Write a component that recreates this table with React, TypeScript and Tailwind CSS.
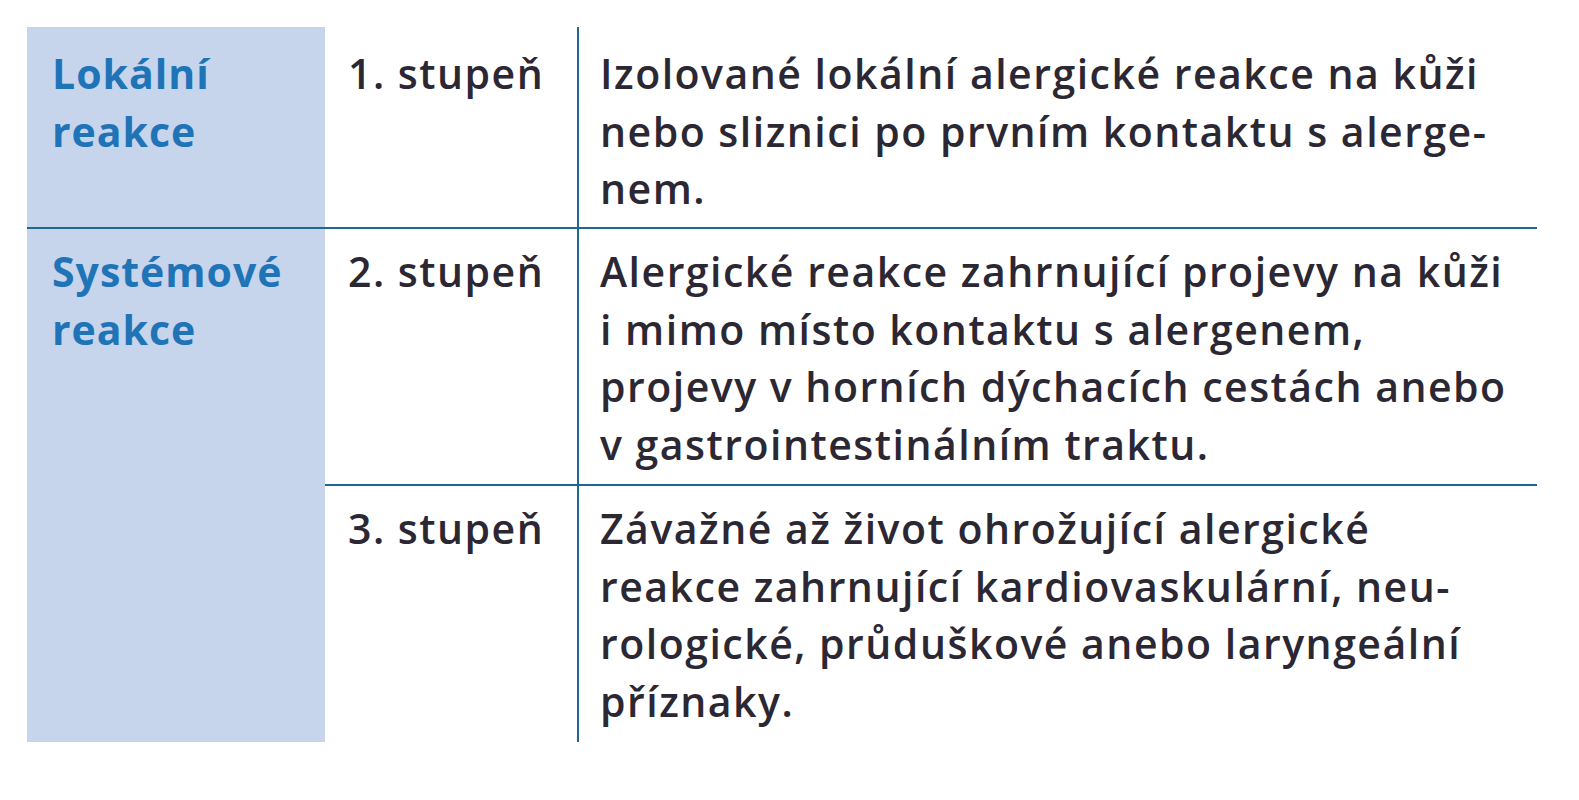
const rows = [
  {
    grade: "1. stupeň",
    lines: [
      "Izolované lokální alergické reakce na kůži",
      "nebo sliznici po prvním kontaktu s alerge-",
      "nem.",
    ],
  },
  {
    grade: "2. stupeň",
    lines: [
      "Alergické reakce zahrnující projevy na kůži",
      "i mimo místo kontaktu s alergenem,",
      "projevy v horních dýchacích cestách anebo",
      "v gastrointestinálním traktu.",
    ],
  },
  {
    grade: "3. stupeň",
    lines: [
      "Závažné až život ohrožující alergické",
      "reakce zahrnující kardiovaskulární, neu-",
      "rologické, průduškové anebo laryngeální",
      "příznaky.",
    ],
  },
];

function Lines({ lines }: { lines: string[] }) {
  return (
    <>
      {lines.map((l) => (
        <div key={l} className="whitespace-nowrap">
          {l}
        </div>
      ))}
    </>
  );
}

export default function App() {
  return (
    <div className="w-[1579px] h-[800px] bg-white pt-[27px] pl-[27px] font-['Open_Sans','Lato',sans-serif] font-semibold text-[41px] tracking-[1.5px] leading-[57.5px] text-[#2b2733]">
      <div className="grid grid-cols-[298px_252px_960px] grid-rows-[202px_257px_256px] w-[1510px]">
        {/* row 1 */}
        <div className="bg-[#c6d4ec] border-b-2 border-[#1d6792] pl-[25px] pt-[18px] font-bold tracking-[1px] text-[#1f73b7]">
          <Lines lines={["Lokální", "reakce"]} />
        </div>
        <div className="border-b-2 border-[#1d6792] pl-[23px] pt-[18px]">{rows[0].grade}</div>
        <div className="border-b-2 border-l-2 border-[#1d6792] pl-[21px] pt-[18px]">
          <Lines lines={rows[0].lines} />
        </div>

        {/* row 2-3 left cell */}
        <div className="row-span-2 bg-[#c6d4ec] pl-[25px] pt-[14px] font-bold tracking-[1px] text-[#1f73b7]">
          <Lines lines={["Systémové", "reakce"]} />
        </div>
        <div className="border-b-2 border-[#1d6792] pl-[23px] pt-[14px]">{rows[1].grade}</div>
        <div className="border-b-2 border-l-2 border-[#1d6792] pl-[21px] pt-[14px]">
          <Lines lines={rows[1].lines} />
        </div>

        <div className="pl-[23px] pt-[14px]">{rows[2].grade}</div>
        <div className="border-l-2 border-[#1d6792] pl-[21px] pt-[14px]">
          <Lines lines={rows[2].lines} />
        </div>
      </div>
    </div>
  );
}
